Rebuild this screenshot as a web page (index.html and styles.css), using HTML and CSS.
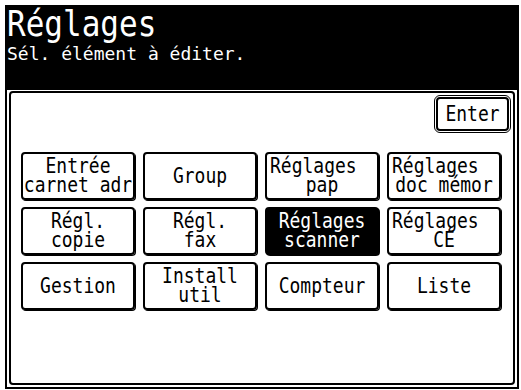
FILE: index.html
```html
<!DOCTYPE html>
<html lang="fr">
<head>
<meta charset="utf-8">
<title>Réglages</title>
<link rel="stylesheet" href="styles.css">
</head>
<body>
<div class="screen">
  <header class="header">
    <div class="title">Réglages</div>
    <div class="subtitle">Sél. élément à éditer.</div>
  </header>
  <main class="panel">
    <div class="toprow">
      <div class="enter"><span class="enter-inner"><span class="txt">Enter</span></span></div>
    </div>
    <div class="grid">
      <div class="btn"><span class="txt">Entrée</span><span class="txt">carnet adr</span></div>
      <div class="btn"><span class="txt">Group</span></div>
      <div class="btn"><span class="txt lft">Réglages</span><span class="txt">pap</span></div>
      <div class="btn"><span class="txt lft">Réglages</span><span class="txt">doc mémor</span></div>
      <div class="btn"><span class="txt">Régl.</span><span class="txt">copie</span></div>
      <div class="btn"><span class="txt">Régl.</span><span class="txt">fax</span></div>
      <div class="btn sel"><span class="txt">Réglages</span><span class="txt">scanner</span></div>
      <div class="btn"><span class="txt lft">Réglages</span><span class="txt">CÉ</span></div>
      <div class="btn"><span class="txt">Gestion</span></div>
      <div class="btn"><span class="txt">Install</span><span class="txt">util</span></div>
      <div class="btn"><span class="txt">Compteur</span></div>
      <div class="btn"><span class="txt">Liste</span></div>
    </div>
  </main>
</div>
</body>
</html>
```
FILE: styles.css
```css
html, body {
  margin: 0;
  padding: 0;
  background: #fff;
}
body {
  font-family: "DejaVu Sans Mono", "Liberation Mono", monospace;
  color: #000;
}
.screen {
  box-sizing: border-box;
  width: 514px;
  height: 384px;
  margin: 5px 0 0 5px;
  border: 2px solid #000;
  border-top: 0;
  display: flex;
  flex-direction: column;
}
.header {
  background: #000;
  color: #fff;
  height: 85px;
  margin: 0 -2px;
  padding: 3px 0 0 2px;
  box-sizing: border-box;
}
.title {
  font-size: 31px;
  line-height: 34px;
  transform: scaleY(1.15);
  transform-origin: 0 27.7px;
}
.subtitle {
  font-size: 18px;
  line-height: 20px;
  margin-top: 2px;
}
.panel {
  flex: 1;
  margin: 1px 2px 2px 2px;
  border: 2px solid #000;
  border-radius: 4px;
  padding: 2px 2px 0 10px;
  display: flex;
  flex-direction: column;
}
.toprow {
  display: flex;
  justify-content: flex-end;
}
.enter {
  box-sizing: border-box;
  width: 77px;
  height: 38px;
  border: 1px solid #000;
  border-radius: 6px;
  padding: 1px;
  font-size: 18px;
}
.enter-inner {
  display: flex;
  box-sizing: border-box;
  height: 100%;
  border: 2px solid #000;
  border-radius: 4px;
  align-items: center;
  justify-content: center;
}
.grid {
  display: grid;
  grid-template-columns: repeat(4, 114px);
  grid-auto-rows: 48px;
  gap: 7px 8px;
  margin-top: 19px;
}
.btn {
  box-sizing: border-box;
  border: 2px solid #000;
  border-radius: 4px;
  box-shadow: 1px 1px 0 #000;
  display: flex;
  flex-direction: column;
  justify-content: center;
  align-items: center;
  font-size: 18px;
  white-space: pre;
}
.txt {
  display: block;
  line-height: 16.5px;
  margin: 1.25px 0;
  transform: scaleY(1.15);
}
.btn .lft {
  align-self: stretch;
  text-align: left;
  padding-left: 3px;
}
.btn.sel {
  background: #000;
  color: #fff;
}
```
